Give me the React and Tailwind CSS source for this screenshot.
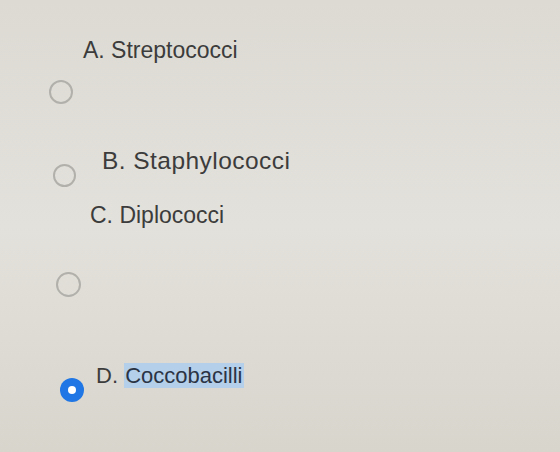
import React from "react";

function Radio({ checked, className = "" }) {
  if (checked) {
    return (
      <span
        className={`flex shrink-0 items-center justify-center rounded-full bg-[#1f76e4] ${className}`}
      >
        <span className="block h-[8px] w-[8px] rounded-full bg-white" />
      </span>
    );
  }
  return (
    <span
      className={`block shrink-0 rounded-full border-2 border-[#b2b0aa] ${className}`}
    />
  );
}

export default function App() {
  return (
    <div
      className="flex h-[452px] w-[560px] flex-col overflow-hidden bg-gradient-to-b from-[#dcdad3] via-[#e3e1db] to-[#d8d5cd] text-[#3c3c3c]"
      style={{ fontFamily: '"Liberation Sans", Arial, sans-serif' }}
    >
      {/* option A */}
      <div className="ml-[83px] mt-[39px] text-[23px] leading-[23px]">
        A. Streptococci
      </div>
      <Radio className="ml-[49px] mt-[18px] h-[24px] w-[24px]" />

      {/* option B */}
      <div className="mt-[44px] flex items-start">
        <Radio className="ml-[53px] mt-[16px] h-[23px] w-[23px]" />
        <span className="ml-[26px] text-[24.5px] leading-[25px] tracking-[0.45px]">
          B. Staphylococci
        </span>
      </div>

      {/* option C */}
      <div className="ml-[90px] mt-[17px] text-[23px] leading-[23px]">
        C. Diplococci
      </div>
      <Radio className="ml-[56px] mt-[45px] h-[25px] w-[25px]" />

      {/* option D, selected */}
      <div className="mt-[67px] flex items-start">
        <Radio checked className="ml-[60px] mt-[14px] h-[24px] w-[24px]" />
        <span className="ml-[12px] text-[22px] leading-[24px]">
          D.{" "}
          <span className="bg-[#b3cfe9] px-[1px] text-[#2b3444]">
            Coccobacilli
          </span>
        </span>
      </div>
    </div>
  );
}
